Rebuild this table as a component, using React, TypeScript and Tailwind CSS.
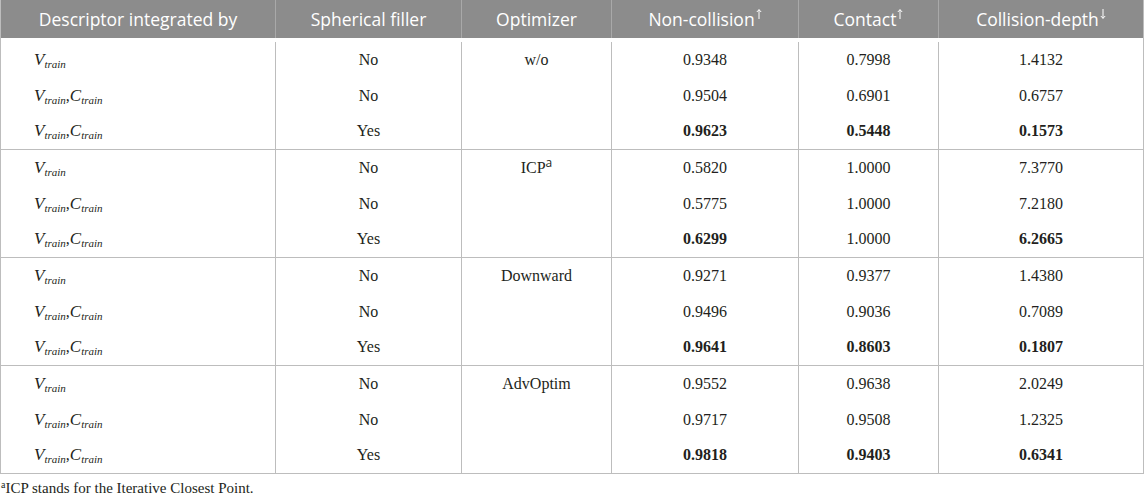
import type { ReactNode } from 'react'

type Row = {
    desc: 'v' | 'vc'
    filler: string
    opt?: ReactNode
    vals: [string, string, string]
    bold?: [boolean, boolean, boolean]
}

const cols = 'grid grid-cols-[275px_186px_150px_187px_140px_204px]'

// calligraphic-ish symbol with italic subscript
const Sym = ({ ch }: { ch: string }) => (
    <span>
        <span className="text-[17px] italic">{ch}</span>
        <sub className="text-[11px] italic">train</sub>
    </span>
)

const groups: Row[][] = [
    [
        { desc: 'v', filler: 'No', opt: 'w/o', vals: ['0.9348', '0.7998', '1.4132'] },
        { desc: 'vc', filler: 'No', vals: ['0.9504', '0.6901', '0.6757'] },
        { desc: 'vc', filler: 'Yes', vals: ['0.9623', '0.5448', '0.1573'], bold: [true, true, true] },
    ],
    [
        {
            desc: 'v',
            filler: 'No',
            opt: (
                <span>
                    ICP<sup className="font-['Open_Sans',sans-serif] text-[12px]">a</sup>
                </span>
            ),
            vals: ['0.5820', '1.0000', '7.3770'],
        },
        { desc: 'vc', filler: 'No', vals: ['0.5775', '1.0000', '7.2180'] },
        { desc: 'vc', filler: 'Yes', vals: ['0.6299', '1.0000', '6.2665'], bold: [true, false, true] },
    ],
    [
        { desc: 'v', filler: 'No', opt: 'Downward', vals: ['0.9271', '0.9377', '1.4380'] },
        { desc: 'vc', filler: 'No', vals: ['0.9496', '0.9036', '0.7089'] },
        { desc: 'vc', filler: 'Yes', vals: ['0.9641', '0.8603', '0.1807'], bold: [true, true, true] },
    ],
    [
        { desc: 'v', filler: 'No', opt: 'AdvOptim', vals: ['0.9552', '0.9638', '2.0249'] },
        { desc: 'vc', filler: 'No', vals: ['0.9717', '0.9508', '1.2325'] },
        { desc: 'vc', filler: 'Yes', vals: ['0.9818', '0.9403', '0.6341'], bold: [true, true, true] },
    ],
]

const rowHeights = ['h-[36px]', 'h-[35px]', 'h-[36px]']

const Header = ({ children, last }: { children: ReactNode; last?: boolean }) => (
    <div
        className={`flex items-center justify-center ${last ? '' : 'border-r border-[#a9a9a9]'}`}
    >
        {children}
    </div>
)

// thin superscript arrow, like the typeset ↑ / ↓
const Arrow = ({ down }: { down?: boolean }) => (
    <svg
        width="6"
        height="10"
        viewBox="0 0 6 10"
        className={`mb-[10px] ml-[1px] ${down ? 'rotate-180' : ''}`}
        fill="none"
        stroke="white"
        strokeWidth="1"
    >
        <path d="M3 0.5V10M0.8 3L3 0.7L5.2 3" />
    </svg>
)

export default function App() {
    return (
        <div className="h-[496px] w-[1145px] overflow-hidden bg-white font-['Liberation_Serif',serif] text-[16px] text-[#231f20]">
            <div className="w-[1144px] border-x border-b border-[#bdbdbd]">
                <div
                    className={`${cols} h-[38px] bg-[#8c8c8c] font-['Open_Sans',sans-serif] text-[17.5px] text-white`}
                >
                    <Header>Descriptor integrated by</Header>
                    <Header>Spherical filler</Header>
                    <Header>Optimizer</Header>
                    <Header>
                        Non-collision
                        <Arrow />
                    </Header>
                    <Header>
                        Contact
                        <Arrow />
                    </Header>
                    <Header last>
                        Collision-depth
                        <Arrow down />
                    </Header>
                </div>

                {groups.map((group, gi) => (
                    <div
                        key={gi}
                        className={`${cols} ${gi === 0 ? 'pt-[4px]' : 'border-t border-[#bdbdbd]'}`}
                    >
                        <div className="border-r border-[#bdbdbd] pl-[33px]">
                            {group.map((row, ri) => (
                                <div key={ri} className={`flex items-center ${rowHeights[ri]}`}>
                                    {row.desc === 'v' ? (
                                        <Sym ch="V" />
                                    ) : (
                                        <span>
                                            <Sym ch="V" />,<Sym ch="C" />
                                        </span>
                                    )}
                                </div>
                            ))}
                        </div>
                        <div className="border-r border-[#bdbdbd]">
                            {group.map((row, ri) => (
                                <div
                                    key={ri}
                                    className={`flex items-center justify-center ${rowHeights[ri]}`}
                                >
                                    {row.filler}
                                </div>
                            ))}
                        </div>
                        <div className="border-r border-[#bdbdbd]">
                            <div className={`flex items-center justify-center ${rowHeights[0]}`}>
                                {group[0].opt}
                            </div>
                        </div>
                        {[0, 1, 2].map((ci) => (
                            <div
                                key={ci}
                                className={ci < 2 ? 'border-r border-[#bdbdbd]' : ''}
                            >
                                {group.map((row, ri) => (
                                    <div
                                        key={ri}
                                        className={`flex items-center justify-center ${rowHeights[ri]} ${
                                            row.bold?.[ci] ? 'font-bold' : ''
                                        }`}
                                    >
                                        {row.vals[ci]}
                                    </div>
                                ))}
                            </div>
                        ))}
                    </div>
                ))}
            </div>

            <p className="mt-[6px] pl-[1px] text-[15px] leading-[16px]">
                <sup className="text-[10px]">a</sup>ICP stands for the Iterative Closest Point.
            </p>
        </div>
    )
}
